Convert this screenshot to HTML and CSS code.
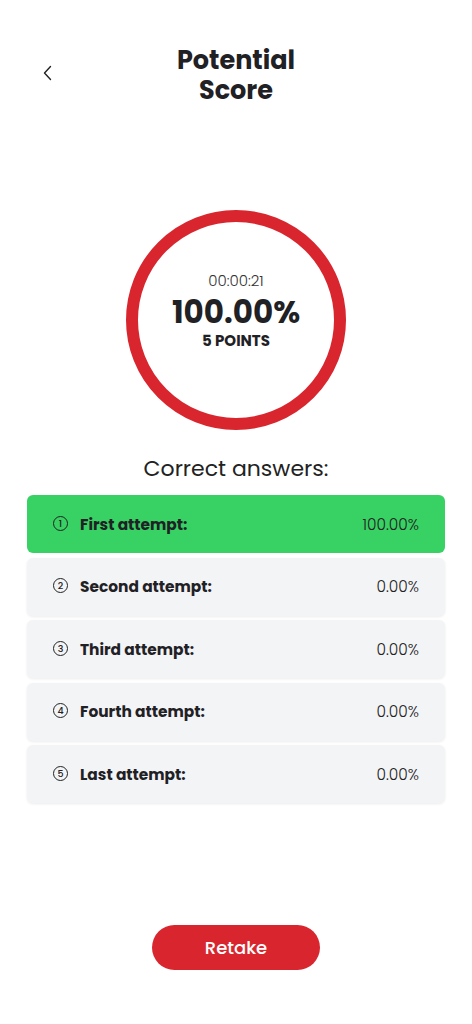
FILE: index.html
```html
<!DOCTYPE html>
<html>
<head>
<meta charset="utf-8">
<link rel="stylesheet" href="styles.css">
</head>
<body>
<div class="page">
  <header class="header">
    <button class="back" aria-label="Back">
      <svg width="12" height="16" viewBox="0 0 12 16"><path d="M8.5 1.5 L2.5 8 L8.5 14.5" fill="none" stroke="#222" stroke-width="1.4" stroke-linecap="round" stroke-linejoin="round"/></svg>
    </button>
    <h1 class="title">Potential<br>Score</h1>
  </header>

  <section class="score">
    <div class="ring">
      <div class="time">00:00:21</div>
      <div class="percent">100.00%</div>
      <div class="points">5 POINTS</div>
    </div>
  </section>

  <h2 class="subtitle">Correct answers:</h2>

  <ul class="attempts">
    <li class="row active"><span class="num">1</span><span class="label">First attempt:</span><span class="value">100.00%</span></li>
    <li class="row"><span class="num">2</span><span class="label">Second attempt:</span><span class="value">0.00%</span></li>
    <li class="row"><span class="num">3</span><span class="label">Third attempt:</span><span class="value">0.00%</span></li>
    <li class="row"><span class="num">4</span><span class="label">Fourth attempt:</span><span class="value">0.00%</span></li>
    <li class="row"><span class="num">5</span><span class="label">Last attempt:</span><span class="value">0.00%</span></li>
  </ul>

  <div class="actions">
    <button class="retake">Retake</button>
  </div>
</div>
</body>
</html>
```
FILE: styles.css
```css
* { box-sizing: border-box; }
html, body { margin: 0; padding: 0; background: #fff; }
body {
  font-family: "Poppins", "Inter", "Noto Sans", sans-serif;
  color: #1f2125;
}
.page {
  width: 472px;
  height: 1024px;
  display: flex;
  flex-direction: column;
  align-items: center;
}
.header {
  position: relative;
  width: 100%;
  padding-top: 45px;
  display: flex;
  justify-content: center;
}
.back {
  position: absolute;
  left: 42px;
  top: 65px;
  background: none;
  border: 0;
  padding: 0;
  width: 12px;
  height: 16px;
  display: block;
}
.back svg { display: block; }
.title {
  margin: 0;
  font-size: 25.5px;
  line-height: 30px;
  font-weight: 700;
  text-align: center;
  color: #1f2125;
}
.score {
  margin-top: 105px;
}
.ring {
  width: 220px;
  height: 220px;
  border-radius: 50%;
  border: 12px solid #d9262e;
  display: flex;
  flex-direction: column;
  align-items: center;
  justify-content: center;
  padding-bottom: 18px;
}
.time {
  font-size: 15px;
  font-weight: 300;
  line-height: 18px;
  color: #333;
  margin-bottom: 4px;
}
.percent {
  font-size: 31px;
  font-weight: 700;
  line-height: 36px;
  margin-bottom: 2px;
}
.points {
  font-size: 15px;
  font-weight: 700;
  line-height: 18px;
}
.subtitle {
  margin: 25px 0 0;
  font-size: 22px;
  font-weight: 400;
  line-height: 28px;
  color: #222;
}
.attempts {
  list-style: none;
  margin: 12px 0 0;
  padding: 0;
  width: 418px;
  display: flex;
  flex-direction: column;
  gap: 4.5px;
}
.row {
  height: 58px;
  border-radius: 6px;
  background: #f3f4f6;
  box-shadow: 0 1px 3px rgba(0,0,0,0.08);
  display: flex;
  align-items: center;
  padding: 0 26px 0 26px;
  font-size: 15.4px;
}
.row.active { background: #38d163; box-shadow: none; }
.num {
  width: 15px;
  height: 15px;
  border: 1px solid #222;
  border-radius: 50%;
  font-size: 9.5px;
  line-height: 13px;
  text-align: center;
  font-weight: 500;
  flex: none;
  margin-right: 12px;
  margin-top: -2px;
}
.label {
  font-weight: 700;
  flex: 1;
  color: #1f2125;
}
.value {
  font-weight: 300;
  color: #222;
}
.actions {
  margin-top: auto;
  margin-bottom: 54px;
}
.retake {
  width: 168px;
  height: 45px;
  border: 0;
  border-radius: 23px;
  background: #d9262e;
  color: #fff;
  font-family: inherit;
  font-size: 18px;
  font-weight: 500;
}
```
